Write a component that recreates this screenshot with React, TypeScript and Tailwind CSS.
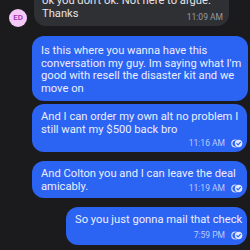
import React from "react";

const Receipt = () => (
  <svg width="12" height="9" viewBox="0 0 12 9" className="shrink-0">
    <circle cx="4.3" cy="4.5" r="3.5" fill="none" stroke="#d3dcff" strokeWidth="1.2" />
    <circle cx="7.6" cy="4.5" r="4.4" fill="#2b63f3" />
    <circle cx="7.6" cy="4.5" r="3.7" fill="#e2e8ff" />
    <path d="M5.8 4.6 L7.1 5.8 L9.4 3.3" fill="none" stroke="#2b63f3" strokeWidth="1.2" strokeLinecap="round" strokeLinejoin="round" />
  </svg>
);

const Time = ({ t }: { t: string }) => (
  <div className="flex items-center gap-[6px] text-[8.5px] leading-[9px] text-[#bccaff]">
    <span>{t}</span>
    <Receipt />
  </div>
);

export default function App() {
  return (
    <div
      className="w-[250px] h-[250px] overflow-hidden bg-[#1b1b1e] text-[11.2px] leading-[12.5px]"
      style={{ fontFamily: "Roboto, 'Noto Sans', sans-serif" }}
    >
      <div className="flex items-end pl-[9px] gap-[7px] mt-[-12px]">
        <div className="w-[18px] h-[18px] rounded-full bg-[#f4c8f7] text-[#9c2bb3] text-[8px] font-medium flex items-center justify-center mb-[-1px]">
          ED
        </div>
        <div className="w-[195px] rounded-[12px] bg-[#2f3034] text-[#e4e4e6] pl-[8px] pr-[6px] pt-[7px] pb-[6px]">
          <div>ok you don't ok. Not here to argue.</div>
          <div className="flex justify-between items-end">
            <span>Thanks</span>
            <span className="text-[8.5px] leading-[9px] text-[#9a9a9e] mb-[-2px]">11:09 AM</span>
          </div>
        </div>
      </div>

      <div className="flex flex-col items-end pr-[2px] mt-[10px] text-[#eceeff]">
        <div className="w-[216px] rounded-[12px] bg-[#2b63f3] pl-[9px] pr-[6px] pt-[9px] pb-[6px]">
          Is this where you wanna have this conversation my guy. Im saying what I'm good with resell the
          disaster kit and we move on
        </div>

        <div className="w-[215px] mr-[1px] mt-[3px] rounded-[12px] bg-[#2b63f3] pl-[9px] pr-[4px] pt-[7px] pb-[4px]">
          <div>And I can order my own alt no problem I still want my $500 back bro</div>
          <div className="flex justify-end mt-[3px]">
            <Time t="11:16 AM" />
          </div>
        </div>

        <div className="w-[215px] mr-[1px] mt-[9px] rounded-[12px] bg-[#2b63f3] pl-[9px] pr-[4px] pt-[7px] pb-[5px]">
          <div>And Colton you and I can leave the deal</div>
          <div className="flex justify-between items-end">
            <span>amicably.</span>
            <Time t="11:19 AM" />
          </div>
        </div>

        <div className="w-[181px] mr-[1px] mt-[9px] rounded-[12px] bg-[#2b63f3] pl-[9px] pr-[4px] pt-[7px] pb-[5px]">
          <div>So you just gonna mail that check</div>
          <div className="flex justify-end mt-[4px]">
            <Time t="7:59 PM" />
          </div>
        </div>
      </div>
    </div>
  );
}
